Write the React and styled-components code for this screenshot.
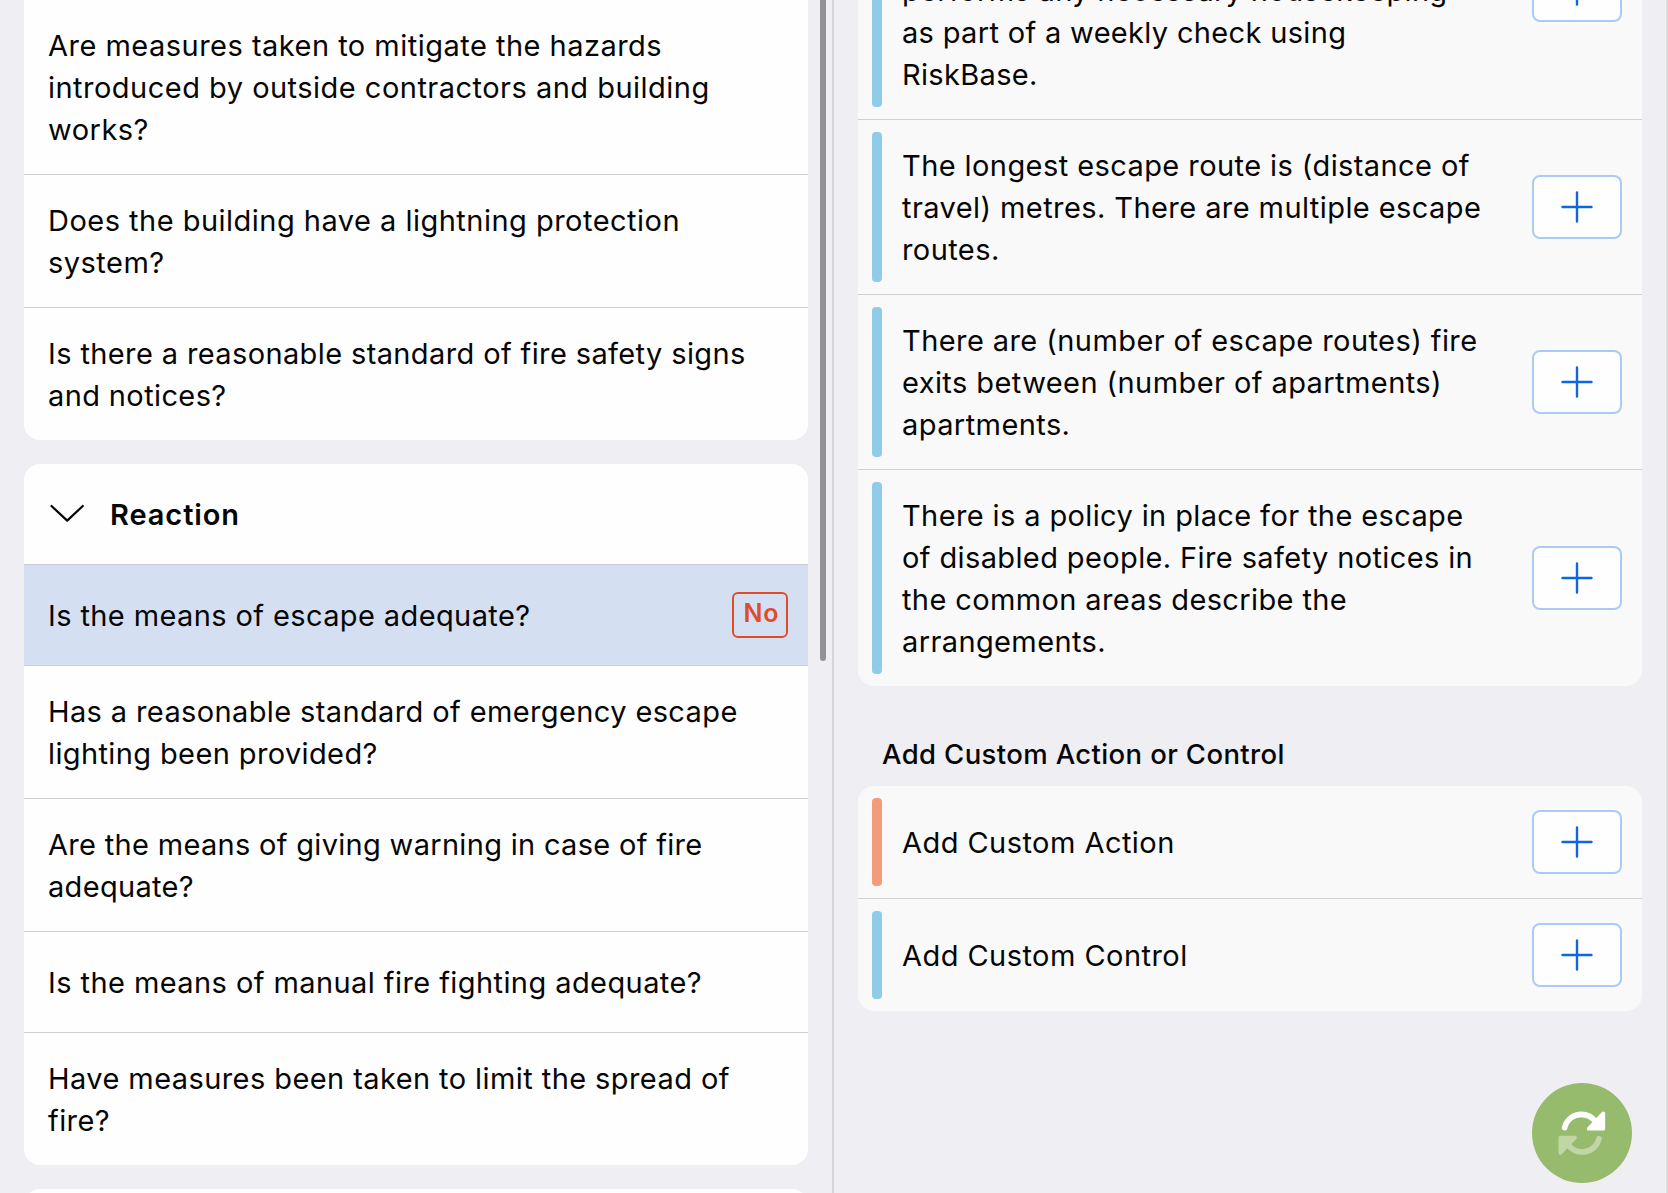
import React from 'react';
import styled, { createGlobalStyle } from 'styled-components';

const GlobalStyle = createGlobalStyle`
  * { box-sizing: border-box; }
  body {
    margin: 0;
    overflow: hidden;
    background: #efeef3;
    color: #060606;
    font-family: Inter, "Liberation Sans", sans-serif;
  }
`;

const Screen = styled.main`
  display: flex;
  width: 1668px;
  height: 1193px;
  overflow: hidden;
`;

const QuestionPane = styled.section`
  display: flex;
  gap: 12px;
  width: 834px;
  padding: 0 6px 0 24px;
  border-right: 2px solid #d6d6d8;
`;

const QuestionList = styled.div`
  display: flex;
  flex-direction: column;
  gap: 24px;
  width: 784px;
  flex-shrink: 0;
`;

const ScrollThumb = styled.div`
  width: 6px;
  height: 661px;
  flex-shrink: 0;
  background: #919196;
  border-radius: 0 0 3px 3px;
`;

const QuestionCard = styled.div`
  flex-shrink: 0;
  overflow: hidden;
  background: #fefefe;
  border-radius: ${(p) => (p.$continued ? '0 0 16px 16px' : '16px')};
`;

const QuestionRow = styled.div`
  display: flex;
  align-items: center;
  justify-content: space-between;
  min-height: ${(p) => (p.$last ? 100 : 101)}px;
  padding: 0 20px 0 24px;
  border-bottom: ${(p) => (p.$last ? 'none' : '1px solid #d0d0d2')};
  background: ${(p) => (p.$selected ? '#d4e0f2' : 'transparent')};
`;

const BodyText = styled.span`
  padding: 25px 0 23px;
  font-size: 29px;
  line-height: 42px;
  letter-spacing: ${(p) => p.$tracking ?? 0.42}px;
  white-space: pre-line;
`;

const GroupHeader = styled.header`
  display: flex;
  align-items: center;
  gap: 24px;
  height: 101px;
  padding: 0 24px;
  border-bottom: 1px solid #c9ced6;
`;

const GroupTitle = styled.h2`
  margin: 0;
  padding-top: 2px;
  font-size: 29px;
  line-height: 42px;
  font-weight: 600;
  letter-spacing: 0.9px;
`;

const AnswerTag = styled.span`
  display: flex;
  justify-content: center;
  width: 56px;
  height: 46px;
  padding-left: 3px;
  border: 2px solid #e04b2b;
  border-radius: 6px;
  color: #e04b2b;
  font-size: 25px;
  line-height: 38px;
  font-weight: 600;
  letter-spacing: 1px;
`;

const NextCard = styled(QuestionCard)`
  height: 100px;
`;

const ActionPane = styled.section`
  display: flex;
  flex-direction: column;
  width: 834px;
  padding: 0 24px;
  border-right: 2px solid #dcdcde;
`;

const ActionCard = styled.div`
  display: flex;
  flex-direction: column;
  flex-shrink: 0;
  overflow: hidden;
  background: #f9f9f9;
  border-radius: 16px;
  margin-top: ${(p) => (p.$scrolled ? '-139px' : 0)};
`;

const ActionRow = styled.div`
  display: flex;
  align-items: center;
  min-height: ${(p) => (p.$tall ? 259 : p.$last ? 112 : 113)}px;
  padding: 12px 20px 12px 14px;
  border-bottom: ${(p) => (p.$last ? 'none' : '1px solid #d0d0d2')};
`;

const Marker = styled.div`
  align-self: stretch;
  width: 10px;
  border-radius: 4px;
  background: ${(p) => (p.$kind === 'action' ? '#f39c7c' : '#90cbe9')};
`;

const ActionText = styled(BodyText)`
  flex: 1;
  align-self: ${(p) => (p.$end ? 'flex-end' : 'center')};
  padding: 13px 0 11px 20px;
`;

const AddButton = styled.button`
  display: flex;
  align-items: center;
  justify-content: center;
  width: 90px;
  height: 64px;
  padding: 0;
  border: 2px solid #a9ccf4;
  border-radius: 8px;
  background: #fefefe;
  color: #0f66e2;
`;

const SectionTitle = styled.h3`
  margin: 48px 0 12px;
  padding-left: 24px;
  font-size: 27.5px;
  line-height: 40px;
  font-weight: 500;
  letter-spacing: 0.37px;
`;

const SyncButton = styled.button`
  position: absolute;
  left: 1532px;
  top: 1082.7px;
  display: flex;
  align-items: center;
  justify-content: center;
  width: 100px;
  height: 100px;
  padding: 0;
  border: 0;
  border-radius: 50%;
  background: #96bb6c;
  color: #fff;
`;

function Plus() {
  return (
    <svg width="32" height="32" viewBox="0 0 32 32" stroke="currentColor" strokeWidth="2.4" strokeLinecap="round">
      <path d="M1.5 16H30.5M16 1.5V30.5" />
    </svg>
  );
}

function Chevron() {
  return (
    <svg width="38" height="24" viewBox="0 0 38 24" fill="none" stroke="currentColor" strokeWidth="2.2" strokeLinecap="round" strokeLinejoin="round">
      <path d="M3.5 4L19.2 18.6L34.8 4" />
    </svg>
  );
}

function SyncArrow({ flipped }) {
  return (
    <g transform={flipped ? 'rotate(180 95.5 98.5)' : undefined} opacity={flipped ? 0.4 : 1}>
      <path d="M44 82C50 57 71 42 94 42C112 42 126 50 137 64" fill="none" stroke="currentColor" strokeWidth="17" strokeLinecap="round" />
      <path d="M160 39V85H116Z" fill="currentColor" stroke="currentColor" strokeWidth="11" strokeLinejoin="round" />
    </g>
  );
}

function Question({ children, answer, selected, last, tracking }) {
  return (
    <QuestionRow $selected={selected} $last={last}>
      <BodyText $tracking={tracking}>{children}</BodyText>
      {answer && <AnswerTag>{answer}</AnswerTag>}
    </QuestionRow>
  );
}

function Action({ children, kind, tall, last, tracking }) {
  return (
    <ActionRow $tall={tall} $last={last}>
      <Marker $kind={kind} />
      <ActionText $end={tall} $tracking={tracking}>{children}</ActionText>
      <AddButton aria-label="Add"><Plus /></AddButton>
    </ActionRow>
  );
}

export default function App() {
  return (
    <>
      <GlobalStyle />
      <Screen>
        <QuestionPane>
          <QuestionList>
            <QuestionCard $continued>
              <Question tracking={0.48}>{'Are measures taken to mitigate the hazards\nintroduced by outside contractors and building\nworks?'}</Question>
              <Question tracking={0.48}>{'Does the building have a lightning protection\nsystem?'}</Question>
              <Question tracking={0.38} last>{'Is there a reasonable standard of fire safety signs\nand notices?'}</Question>
            </QuestionCard>
            <QuestionCard>
              <GroupHeader>
                <Chevron />
                <GroupTitle>Reaction</GroupTitle>
              </GroupHeader>
              <Question tracking={0.39} selected answer="No">Is the means of escape adequate?</Question>
              <Question tracking={0.38}>{'Has a reasonable standard of emergency escape\nlighting been provided?'}</Question>
              <Question tracking={0.31}>{'Are the means of giving warning in case of fire\nadequate?'}</Question>
              <Question>Is the means of manual fire fighting adequate?</Question>
              <Question last>{'Have measures been taken to limit the spread of\nfire?'}</Question>
            </QuestionCard>
            <NextCard />
          </QuestionList>
          <ScrollThumb />
        </QuestionPane>
        <ActionPane>
          <ActionCard $scrolled>
            <Action tall tracking={0.33}>{'performs any necessary housekeeping\nas part of a weekly check using\nRiskBase.'}</Action>
            <Action>{'The longest escape route is (distance of\ntravel) metres. There are multiple escape\nroutes.'}</Action>
            <Action>{'There are (number of escape routes) fire\nexits between (number of apartments)\napartments.'}</Action>
            <Action tracking={0.38} last>{'There is a policy in place for the escape\nof disabled people. Fire safety notices in\nthe common areas describe the\narrangements.'}</Action>
          </ActionCard>
          <SectionTitle>Add Custom Action or Control</SectionTitle>
          <ActionCard>
            <Action kind="action" tracking={0.45}>Add Custom Action</Action>
            <Action last tracking={0.45}>Add Custom Control</Action>
          </ActionCard>
        </ActionPane>
      </Screen>
      <SyncButton aria-label="Sync">
        <svg width="64" height="64" viewBox="0 2 192 192">
          <SyncArrow />
          <SyncArrow flipped />
        </svg>
      </SyncButton>
    </>
  );
}
